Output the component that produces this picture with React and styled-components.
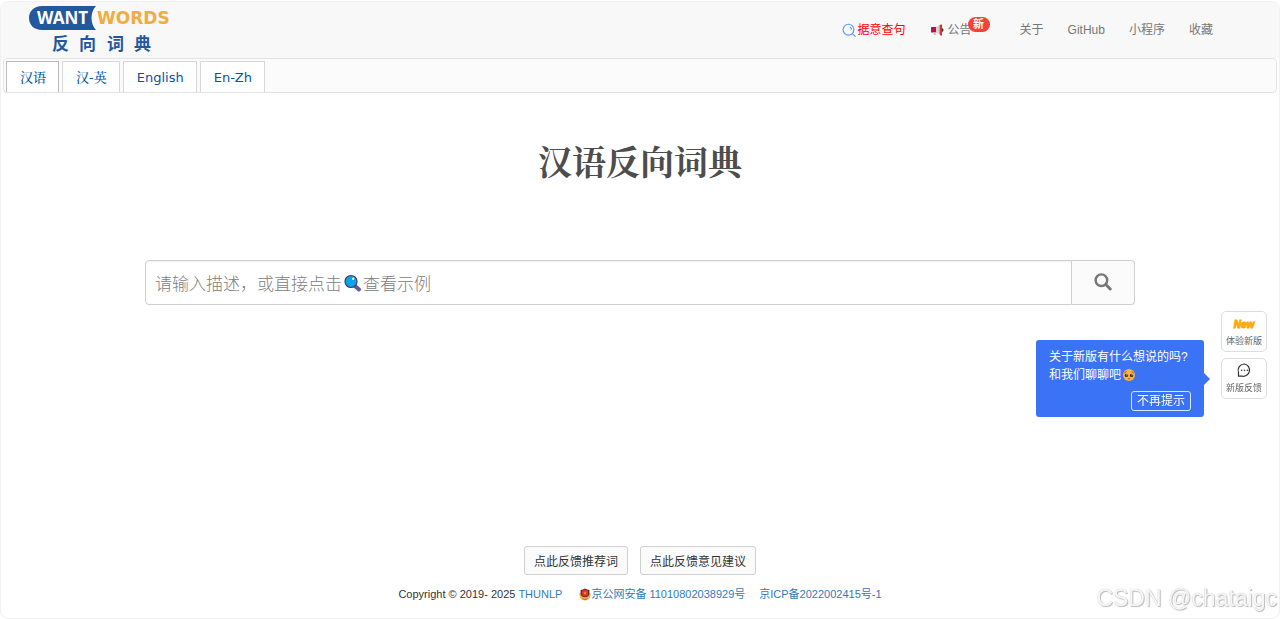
import React, { useState } from "react";
import styled, { createGlobalStyle } from "styled-components";

const GlobalStyle = createGlobalStyle`
  * {
    box-sizing: border-box;
  }
  body {
    margin: 0;
    background: #fff;
    color: #333;
    font-family: "Liberation Sans", "Noto Sans CJK SC", sans-serif;
    font-size: 12px;
  }
  a {
    text-decoration: none;
  }
  button,
  input {
    font-family: inherit;
  }
`;

const Page = styled.div`
  min-height: calc(100vh - 1px);
  margin-top: 1px;
  display: flex;
  flex-direction: column;
  overflow: hidden;
  border: 1px solid #f1f1f1;
  border-radius: 8px;
`;

const Header = styled.header`
  height: 56px;
  padding: 0 66px 0 28px;
  display: flex;
  justify-content: space-between;
  align-items: flex-start;
  background: #f8f8f8;
`;

const Brand = styled.a`
  display: block;
  padding-top: 3px;
`;

const Nav = styled.nav`
  display: flex;
  height: 56px;
  align-items: center;
  gap: 24px;
`;

const NavLink = styled.a`
  display: flex;
  align-items: center;
  gap: ${(p) => p.$gap || 0}px;
  line-height: 16px;
  color: ${(p) => (p.$hot ? "#f00" : "#777")};
`;

const NewsItem = styled(NavLink)`
  position: relative;
  margin-right: 24px;
`;

const Badge = styled.span`
  position: absolute;
  top: -5px;
  left: 38px;
  width: 22px;
  height: 15px;
  border-radius: 8px;
  background: #f44336;
  color: #fff;
  font-size: 11px;
  font-weight: bold;
  line-height: 15px;
  text-align: center;
`;

const TabBar = styled.div`
  display: flex;
  align-items: flex-end;
  gap: 3px;
  height: 35px;
  margin: 0 2px;
  padding-left: 2px;
  background: #fbfbfb;
  border: 1px solid #e3e3e3;
  border-radius: 4px;
`;

const Tab = styled.button`
  height: 31px;
  padding: 2px 12px 0 13px;
  background: #fff;
  border: 1px solid ${(p) => (p.$active ? "#bbb" : "#d8d8d8")};
  border-bottom: 0;
  color: #0254a0;
  font-family: "DejaVu Sans", "Noto Serif CJK SC", "Noto Sans CJK SC", sans-serif;
  font-size: 13px;
  font-weight: 500;
  line-height: 18px;
  cursor: pointer;
`;

const Main = styled.main`
  flex: 1;
  padding: 44px 144px 0;
`;

const Title = styled.h1`
  margin: 0;
  text-align: center;
  color: #4d4d4d;
  font-family: "Noto Serif CJK SC", "Noto Sans CJK SC", serif;
  font-size: 34px;
  font-weight: bold;
  line-height: 48px;
`;

const SearchForm = styled.form`
  display: flex;
  height: 45px;
  margin-top: 75px;
`;

const SearchField = styled.div`
  position: relative;
  flex: 1;
`;

const SearchInput = styled.input`
  width: 100%;
  height: 100%;
  padding: 0 10px;
  border: 1px solid #d0d0d0;
  border-radius: 4px 0 0 4px;
  box-shadow: inset 0 1px 1px rgba(0, 0, 0, 0.05);
  background: #fff;
  font-size: 17px;
  outline: none;
`;

const Hint = styled.label`
  position: absolute;
  inset: 0 auto 0 10px;
  display: flex;
  align-items: center;
  color: #808080;
  font-size: 17px;
  font-weight: 300;
  pointer-events: none;
`;

const SearchButton = styled.button`
  width: 63px;
  padding: 0 0 2px;
  display: flex;
  align-items: center;
  justify-content: center;
  background: #fbfbfb;
  border: 1px solid #d0d0d0;
  border-left: 0;
  border-radius: 0 4px 4px 0;
  cursor: pointer;
`;

const Floating = styled.aside`
  position: fixed;
  top: 311px;
  right: 13px;
  display: flex;
  flex-direction: column;
  gap: 6px;
`;

const SideButton = styled.button`
  width: 46px;
  height: 41px;
  padding: 4px 0 0;
  display: flex;
  flex-direction: column;
  align-items: center;
  gap: 3px;
  background: #fff;
  border: 1px solid #ddd;
  border-radius: 5px;
  color: #666;
  font-size: 9px;
  line-height: 14px;
  white-space: nowrap;
  cursor: pointer;
`;

const NewMark = styled.span`
  height: 15px;
  color: #fbaa0c;
  font-family: "Liberation Sans Narrow", "Liberation Sans", sans-serif;
  font-size: 10px;
  font-style: italic;
  font-weight: bold;
  line-height: 17px;
  -webkit-text-stroke: 1px #fbaa0c;
`;

const Popover = styled.div`
  position: absolute;
  top: 29px;
  right: 63px;
  width: 168px;
  height: 77px;
  padding: 8px 13px;
  display: flex;
  flex-direction: column;
  background: #3b73f6;
  border-radius: 3px;
  color: #fff;
  white-space: nowrap;

  &::after {
    content: "";
    position: absolute;
    top: 33px;
    right: -6px;
    border: 6px solid transparent;
    border-left-color: #3b73f6;
    border-right: 0;
  }
`;

const PopoverLine = styled.div`
  display: flex;
  align-items: center;
  height: 18px;
  line-height: 18px;
`;

const DismissButton = styled.button`
  align-self: flex-end;
  width: 60px;
  height: 20px;
  margin-top: 7px;
  padding: 0;
  background: transparent;
  border: 1px solid #dbe5ff;
  border-radius: 3px;
  color: #fff;
  font-size: 12px;
  line-height: 18px;
  cursor: pointer;
`;

const Footer = styled.footer`
  display: flex;
  flex-direction: column;
  align-items: center;
  padding-bottom: 16px;
`;

const FeedbackRow = styled.div`
  display: flex;
  gap: 12px;
`;

const FeedbackButton = styled.button`
  height: 29px;
  padding: 0 9px;
  background: #fbfbfb;
  border: 1px solid #d0d0d0;
  border-radius: 3px;
  color: #333;
  font-size: 12px;
  cursor: pointer;
`;

const Legal = styled.div`
  display: flex;
  align-items: center;
  margin-top: 11px;
  font-size: 11px;
  line-height: 16px;
`;

const LegalLink = styled.a`
  display: flex;
  align-items: center;
  margin-left: ${(p) => p.$space}px;
  color: #337ab7;
`;

const Watermark = styled.div`
  position: fixed;
  right: 3px;
  bottom: 8px;
  color: #f6f6f6;
  font-size: 23px;
  line-height: 26px;
  text-shadow: 1px 1px 1px #bbb, 0 0 1px #bbb;
`;

const Logo = () => (
  <svg width="142" height="50" viewBox="0 0 142 50" role="img" aria-label="WantWords 反向词典">
    <path
      d="M13 1H67C61 7 61 19 67 25H13C5 25 0 20 0 13S5 1 13 1Z"
      fill="#23589f"
    />
    <g fontFamily="Noto Sans, sans-serif" fontWeight="bold" fontSize="17">
      <text x="8" y="19" fill="#fff">
        WANT
      </text>
      <text x="68" y="19" fontFamily="DejaVu Sans, sans-serif" fill="#f0ad3f">
        WORDS
      </text>
    </g>
    <g
      fontFamily="Noto Sans CJK SC, sans-serif"
      fontSize="17"
      fontWeight="bold"
      fill="#23589f"
    >
      <text x="23" y="45">反</text>
      <text x="50" y="45">向</text>
      <text x="78" y="45">词</text>
      <text x="105" y="45">典</text>
    </g>
  </svg>
);

const QueryIcon = () => (
  <svg width="14" height="14" viewBox="0 0 14 14" fill="none" stroke="#5797f7" strokeWidth="1.1">
    <circle cx="6.5" cy="6.7" r="5.4" />
    <path d="M10.4 10.6L13.2 13.4M8.2 4.3Q9.3 5 9.4 6.3" strokeLinecap="round" />
  </svg>
);

const HornIcon = () => (
  <svg width="14" height="12" viewBox="0 0 14 12">
    <path d="M1 3.5Q1 3 1.5 3H6V8.5H1.5Q1 8.5 1 8Z" fill="#ca0b4a" />
    <path d="M3 8.5H6V11H4Z" fill="#ccc" />
    <path d="M6 3L9 1.5V10L6 8.5Z" fill="#d3d3d3" />
    <path d="M12 4Q13.5 4.5 13.5 6T12 8Z" fill="#333" />
    <path d="M9.5 1.5Q10 0 12 .5V11.5Q10 12 9.5 10Z" fill="#f8222d" />
  </svg>
);

const LensEmoji = () => (
  <svg width="21" height="20" viewBox="0 0 21 20">
    <path d="M13 13L17 16.5" stroke="#635994" strokeWidth="4" strokeLinecap="round" />
    <circle cx="9" cy="8.5" r="6" fill="#00a6ed" stroke="#533566" strokeWidth="1.2" />
    <circle cx="11.2" cy="5.7" r="1.2" fill="#fff" />
  </svg>
);

const SearchIcon = () => (
  <svg width="18" height="18" viewBox="0 0 18 18" fill="none" stroke="#777">
    <circle cx="7.4" cy="7.2" r="5.8" strokeWidth="2.4" />
    <path d="M11.8 11.5L16.2 16" strokeWidth="3" strokeLinecap="round" />
  </svg>
);

const ChatIcon = () => (
  <svg width="16" height="15" viewBox="0 0 16 15">
    <path
      d="M8.5 1A6.2 6.2 0 1 1 6 13.2H2.5V9.5A6.3 6.3 0 0 1 8.5 1Z"
      fill="none"
      stroke="#333"
      strokeWidth="1.2"
      strokeLinejoin="round"
    />
    <g fill="#333">
      <circle cx="5.6" cy="7.3" r=".8" />
      <circle cx="8.5" cy="7.3" r=".8" />
      <circle cx="11.4" cy="7.3" r=".8" />
    </g>
  </svg>
);

const PleadingFace = () => (
  <svg width="15" height="14" viewBox="0 0 15 14">
    <circle cx="8" cy="7" r="6" fill="#fbb13c" />
    <circle cx="5.4" cy="7.4" r="1.7" fill="#402a32" />
    <circle cx="10.6" cy="7.4" r="1.7" fill="#402a32" />
    <circle cx="5.9" cy="6.8" r=".6" fill="#fff" />
    <circle cx="11.1" cy="6.8" r=".6" fill="#fff" />
    <path d="M3.2 5L5.4 3.6M12.8 5L10.6 3.6M7 11Q8 10.2 9 11" stroke="#7b4b1f" strokeWidth=".8" fill="none" />
  </svg>
);

const PoliceBadge = () => (
  <svg width="12" height="13" viewBox="0 0 12 13">
    <path d="M.6 5Q-.2 10 2.6 11.4Q6 13.6 9.4 11.4Q12.2 10 11.4 5Z" fill="#ecb653" />
    <path d="M6 .4Q8 1.8 10.4 2V6Q10 9 6 9.2Q2 9 1.6 6V2Q4 1.8 6 .4Z" fill="#4c2b3c" />
    <circle cx="6" cy="5" r="3.4" fill="#e32c1e" />
    <path d="M6 3L6.6 4.4H8L6.9 5.3L7.3 6.8L6 6L4.7 6.8L5.1 5.3L4 4.4H5.4Z" fill="#f79a33" />
    <path d="M3.4 10.8Q6 12 8.6 10.8" stroke="#c9602f" fill="none" />
  </svg>
);

const TABS = ["汉语", "汉-英", "English", "En-Zh"];

const App = () => {
  const [tab, setTab] = useState(0);
  const [query, setQuery] = useState("");
  const [showTip, setShowTip] = useState(true);

  return (
    <Page>
      <GlobalStyle />
      <Header>
        <Brand href="#">
          <Logo />
        </Brand>
        <Nav>
          <NavLink href="#" $hot $gap={2}>
            <QueryIcon />
            据意查句
          </NavLink>
          <NewsItem href="#" $gap={4}>
            <HornIcon />
            公告
            <Badge>新</Badge>
          </NewsItem>
          <NavLink href="#">关于</NavLink>
          <NavLink href="#">GitHub</NavLink>
          <NavLink href="#">小程序</NavLink>
          <NavLink href="#">收藏</NavLink>
        </Nav>
      </Header>
      <TabBar role="tablist">
        {TABS.map((name, i) => (
          <Tab
            key={name}
            role="tab"
            aria-selected={tab === i}
            $active={tab === i}
            onClick={() => setTab(i)}
          >
            {name}
          </Tab>
        ))}
      </TabBar>
      <Main>
        <Title>汉语反向词典</Title>
        <SearchForm onSubmit={(e) => e.preventDefault()}>
          <SearchField>
            <SearchInput
              id="description"
              aria-label="请输入描述"
              value={query}
              onChange={(e) => setQuery(e.target.value)}
            />
            {!query && (
              <Hint htmlFor="description">
                请输入描述，或直接点击
                <LensEmoji />
                查看示例
              </Hint>
            )}
          </SearchField>
          <SearchButton type="submit" aria-label="查看示例">
            <SearchIcon />
          </SearchButton>
        </SearchForm>
      </Main>
      <Footer>
        <FeedbackRow>
          <FeedbackButton>点此反馈推荐词</FeedbackButton>
          <FeedbackButton>点此反馈意见建议</FeedbackButton>
        </FeedbackRow>
        <Legal>
          <span>Copyright © 2019- 2025</span>
          <LegalLink href="#" $space={3}>
            THUNLP
          </LegalLink>
          <LegalLink href="#" $space={17}>
            <PoliceBadge />
            京公网安备 11010802038929号
          </LegalLink>
          <LegalLink href="#" $space={14}>
            京ICP备2022002415号-1
          </LegalLink>
        </Legal>
      </Footer>
      <Floating>
        <SideButton>
          <NewMark>New</NewMark>
          体验新版
        </SideButton>
        <SideButton>
          <ChatIcon />
          新版反馈
        </SideButton>
        {showTip && (
          <Popover>
            <PopoverLine>关于新版有什么想说的吗?</PopoverLine>
            <PopoverLine>
              和我们聊聊吧
              <PleadingFace />
            </PopoverLine>
            <DismissButton onClick={() => setShowTip(false)}>
              不再提示
            </DismissButton>
          </Popover>
        )}
      </Floating>
      <Watermark>CSDN @chataigc</Watermark>
    </Page>
  );
};

export default App;
